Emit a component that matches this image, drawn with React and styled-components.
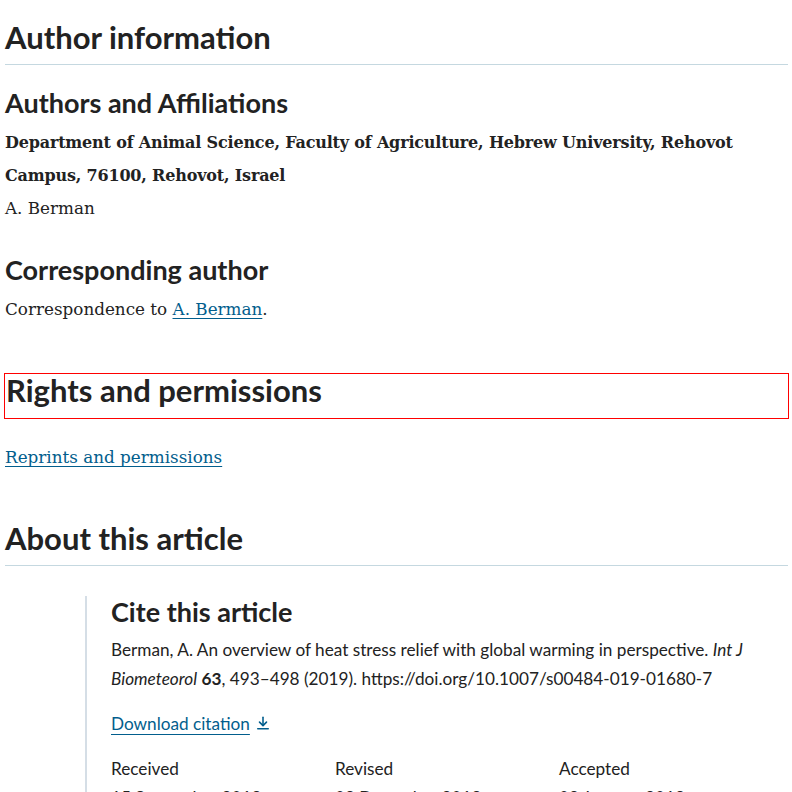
import React from 'react'
import styled, { createGlobalStyle } from 'styled-components'

const GlobalStyle = createGlobalStyle`
  html, body {
    margin: 0;
    padding: 0;
    background: #ffffff;
  }
  body {
    font-family: "DejaVu Serif", "Liberation Serif", serif;
    color: #222222;
  }
`

const Page = styled.main`
  padding: 0 4px 0 5px;
`

const Section = styled.section`
  margin-top: ${p => p.$top || 0}px;
`

const SectionTitle = styled.h2`
  margin: 0;
  padding: 17px 0 7px;
  font-family: Lato, "Open Sans", sans-serif;
  font-weight: 700;
  font-size: 31px;
  line-height: 40px;
  color: #222222;
  border-bottom: ${p => (p.$plain ? 'none' : '1px solid #c5d8e0')};
  ${p => p.$focused && `
    outline: 1px solid #ff0000;
    padding: 0 0 12px 1px;
    line-height: 32px;
    margin-top: 1px;
  `}
`

const SubTitle = styled.h3`
  margin: ${p => p.$top || 0}px 0 0;
  font-family: Lato, "Open Sans", sans-serif;
  font-weight: 700;
  font-size: 27px;
  line-height: 31px;
  color: #222222;
`

const Text = styled.p`
  margin: ${p => p.$top || 0}px 0 0;
  font-size: ${p => (p.$bold ? 16 : 16.8)}px;
  letter-spacing: ${p => (p.$bold ? '-0.18px' : 'normal')};
  line-height: 32.5px;
  font-weight: ${p => (p.$bold ? 700 : 400)};
  color: #222222;
`

const Link = styled.a`
  color: #025e8d;
  text-decoration: underline;
  text-decoration-thickness: 1px;
  text-underline-offset: 3px;
`

const CiteBlock = styled.div`
  margin: 30px 0 0 80px;
  padding-left: 24px;
  border-left: 2px solid #d5dee6;
  font-family: Lato, "Open Sans", sans-serif;
`

const Citation = styled.p`
  margin: 8px 0 0;
  font-size: 17.2px;
  line-height: 29px;
  color: #222222;
`

const DownloadLink = styled(Link)`
  display: inline-flex;
  align-items: center;
  gap: 6px;
  margin-top: 16px;
  font-size: 17.2px;
  line-height: 29px;
  text-decoration: none;
  span {
    text-decoration: underline;
    text-underline-offset: 4px;
  }
`

const Dates = styled.dl`
  display: grid;
  grid-template-columns: repeat(3, 224px);
  margin: 16px 0 0;
`

const DateItem = styled.div`
  dt, dd {
    margin: 0;
    font-size: 17.2px;
    line-height: 29px;
    color: #222222;
  }
`

function DownloadIcon() {
  return (
    <svg width="14" height="14" viewBox="0 0 16 16" fill="none" stroke="#025e8d" strokeWidth="1.8" strokeLinecap="round" strokeLinejoin="round">
      <path d="M8 1.5v9" />
      <path d="M4 7l4 4 4-4" />
      <path d="M2 14.5h12" />
    </svg>
  )
}

const dates = [
  { label: 'Received', value: '15 September 2018' },
  { label: 'Revised', value: '08 December 2018' },
  { label: 'Accepted', value: '08 January 2019' },
]

export default function App() {
  return (
    <>
      <GlobalStyle />
      <Page>
        <Section>
          <SectionTitle>Author information</SectionTitle>
          <SubTitle $top={22}>Authors and Affiliations</SubTitle>
          <Text $top={9} $bold>
            Department of Animal Science, Faculty of Agriculture, Hebrew University, Rehovot Campus, 76100, Rehovot, Israel
          </Text>
          <Text>A. Berman</Text>
          <SubTitle $top={29}>Corresponding author</SubTitle>
          <Text $top={8}>
            Correspondence to <Link href="#">A. Berman</Link>.
          </Text>
        </Section>

        <Section $top={49}>
          <SectionTitle $plain $focused>Rights and permissions</SectionTitle>
          <Text $top={23}>
            <Link href="#">Reprints and permissions</Link>
          </Text>
        </Section>

        <Section $top={27}>
          <SectionTitle>About this article</SectionTitle>
          <CiteBlock>
            <SubTitle>Cite this article</SubTitle>
            <Citation>
              Berman, A. An overview of heat stress relief with global warming in perspective. <i>Int J Biometeorol</i> <b>63</b>, 493–498 (2019). https://doi.org/10.1007/s00484-019-01680-7
            </Citation>
            <DownloadLink href="#">
              <span>Download citation</span>
              <DownloadIcon />
            </DownloadLink>
            <Dates>
              {dates.map(d => (
                <DateItem key={d.label}>
                  <dt>{d.label}</dt>
                  <dd>{d.value}</dd>
                </DateItem>
              ))}
            </Dates>
          </CiteBlock>
        </Section>
      </Page>
    </>
  )
}
